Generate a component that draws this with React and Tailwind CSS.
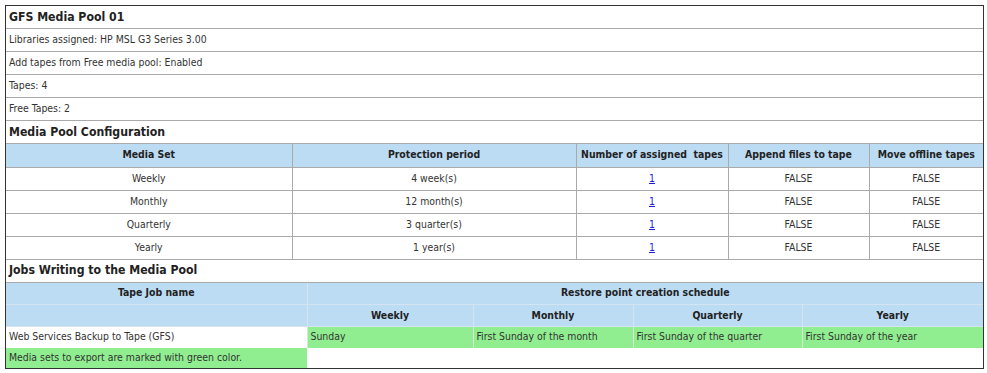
import React from 'react';

const font = { fontFamily: '"DejaVu Sans Condensed", "DejaVu Sans", Tahoma, sans-serif' };

const poolRows = [
  { set: 'Weekly', period: '4 week(s)' },
  { set: 'Monthly', period: '12 month(s)' },
  { set: 'Quarterly', period: '3 quarter(s)' },
  { set: 'Yearly', period: '1 year(s)' },
];

const InfoRow = ({ children }) => (
  <div className="h-[23px] border-b border-[#aaaaaa] pl-[3px] flex items-center text-[10.4px] text-[#333]">
    {children}
  </div>
);

const SectionRow = ({ children }) => (
  <div className="h-[23px] border-b border-[#aaaaaa] pl-[3px] flex items-center text-[12.2px] font-bold text-[#222]">
    {children}
  </div>
);

export default function App() {
  return (
    <div className="bg-white w-[987px] h-[373px] pt-[5px] pl-[5px]" style={font}>
      <div className="w-[979px] border border-[#333]">
        <div className="h-[23px] border-b border-[#aaaaaa] pl-[3px] flex items-center text-[12.2px] font-bold text-[#222]">
          GFS Media Pool 01
        </div>
        <InfoRow>Libraries assigned: HP MSL G3 Series 3.00</InfoRow>
        <InfoRow>Add tapes from Free media pool: Enabled</InfoRow>
        <InfoRow>Tapes: 4</InfoRow>
        <InfoRow>Free Tapes: 2</InfoRow>
        <SectionRow>Media Pool Configuration</SectionRow>

        <table className="w-full table-fixed border-collapse text-[10.4px]">
          <colgroup>
            <col className="w-[286px]" />
            <col className="w-[284px]" />
            <col className="w-[152px]" />
            <col className="w-[141px]" />
            <col className="w-[114px]" />
          </colgroup>
          <thead>
            <tr className="h-[23px] bg-[#bcdcf4] text-[#222] font-bold">
              <th className="border-b border-[#aaaaaa] font-bold">Media Set</th>
              <th className="border-b border-l border-[#aaaaaa] font-bold">Protection period</th>
              <th className="border-b border-l border-[#aaaaaa] font-bold whitespace-pre">Number of assigned  tapes</th>
              <th className="border-b border-l border-[#aaaaaa] font-bold">Append files to tape</th>
              <th className="border-b border-l border-[#aaaaaa] font-bold">Move offline tapes</th>
            </tr>
          </thead>
          <tbody>
            {poolRows.map((r) => (
              <tr key={r.set} className="h-[23px] text-[#333] text-center">
                <td className="border-b border-[#aaaaaa]">{r.set}</td>
                <td className="border-b border-l border-[#aaaaaa]">{r.period}</td>
                <td className="border-b border-l border-[#aaaaaa]">
                  <a href="#" className="text-[#1a1adc] underline">1</a>
                </td>
                <td className="border-b border-l border-[#aaaaaa]">FALSE</td>
                <td className="border-b border-l border-[#aaaaaa]">FALSE</td>
              </tr>
            ))}
          </tbody>
        </table>

        <SectionRow>Jobs Writing to the Media Pool</SectionRow>

        <table className="w-full table-fixed border-collapse text-[10.4px]">
          <colgroup>
            <col className="w-[301px]" />
            <col className="w-[166px]" />
            <col className="w-[160px]" />
            <col className="w-[169px]" />
            <col className="w-[181px]" />
          </colgroup>
          <thead>
            <tr className="h-[22px] bg-[#bcdcf4] text-[#222]">
              <th className="border-b border-[#d4e4f0] font-bold">Tape Job name</th>
              <th colSpan={4} className="border-b border-l border-[#d4e4f0] font-bold">Restore point creation schedule</th>
            </tr>
            <tr className="h-[22px] bg-[#bcdcf4] text-[#222]">
              <th className="border-b border-[#d4e4f0]"></th>
              <th className="border-b border-l border-[#d4e4f0] font-bold">Weekly</th>
              <th className="border-b border-l border-[#d4e4f0] font-bold">Monthly</th>
              <th className="border-b border-l border-[#d4e4f0] font-bold">Quarterly</th>
              <th className="border-b border-l border-[#d4e4f0] font-bold">Yearly</th>
            </tr>
          </thead>
          <tbody>
            <tr className="h-[21px] text-[#333]">
              <td className="pl-[3px] bg-white">Web Services Backup to Tape (GFS)</td>
              <td className="pl-[3px] bg-[#90ee90] border-l border-[#d8e8d8]">Sunday</td>
              <td className="pl-[3px] bg-[#90ee90] border-l border-[#d8e8d8]">First Sunday of the month</td>
              <td className="pl-[3px] bg-[#90ee90] border-l border-[#d8e8d8]">First Sunday of the quarter</td>
              <td className="pl-[3px] bg-[#90ee90] border-l border-[#d8e8d8]">First Sunday of the year</td>
            </tr>
            <tr className="h-[20px] text-[#333]">
              <td className="pl-[3px] bg-[#90ee90]">Media sets to export are marked with green color.</td>
              <td colSpan={4} className="bg-white"></td>
            </tr>
          </tbody>
        </table>
      </div>
    </div>
  );
}
